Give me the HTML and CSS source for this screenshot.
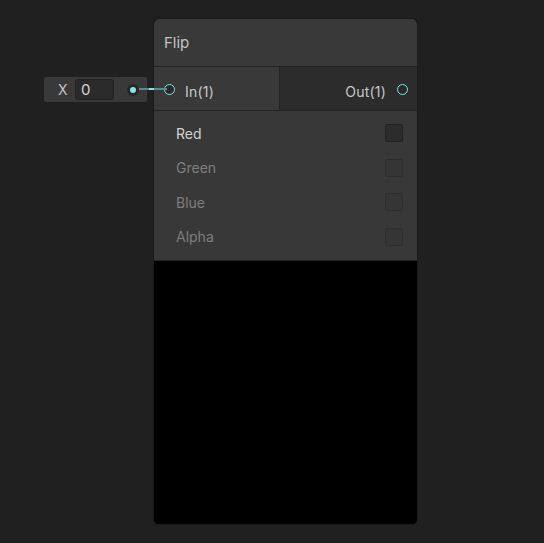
FILE: index.html
```html
<!DOCTYPE html>
<html>
<head>
<meta charset="utf-8">
<link rel="stylesheet" href="styles.css">
</head>
<body>
<div class="canvas">
  <div class="inline-field">
    <span class="field-label">X</span>
    <div class="field-box">0</div>
    <span class="field-port"><span class="field-port-dot"></span></span>
  </div>
  <div class="node">
    <div class="title">Flip</div>
    <div class="ports">
      <div class="inputs">
        <span class="port-ring"></span>
        <span class="port-label">In(1)</span>
      </div>
      <div class="outputs">
        <span class="port-label">Out(1)</span>
        <span class="port-ring"></span>
      </div>
    </div>
    <div class="settings">
      <div class="setting-row"><span class="setting-label">Red</span><span class="checkbox"></span></div>
      <div class="setting-row disabled"><span class="setting-label">Green</span><span class="checkbox"></span></div>
      <div class="setting-row disabled"><span class="setting-label">Blue</span><span class="checkbox"></span></div>
      <div class="setting-row disabled"><span class="setting-label">Alpha</span><span class="checkbox"></span></div>
    </div>
    <div class="preview"></div>
  </div>
  <svg class="edge" width="28" height="4" viewBox="0 0 28 4">
    <line x1="0" y1="2" x2="28" y2="2" stroke="#4f8f91" stroke-width="2"/>
    <line x1="10" y1="2" x2="15" y2="2" stroke="#84e4e7" stroke-width="2"/>
  </svg>
</div>
</body>
</html>
```

FILE: styles.css
```css
html, body {
  margin: 0;
  padding: 0;
  background: #202020;
  font-family: Inter, "Noto Sans", sans-serif;
}

.canvas {
  position: relative;
  display: flex;
  align-items: flex-start;
  padding: 18px 0 0 44px;
  width: 544px;
  height: 543px;
  box-sizing: border-box;
}

.inline-field {
  margin-top: 59px;
  width: 103px;
  height: 25px;
  box-sizing: border-box;
  background: #393939;
  border-radius: 2px;
  display: flex;
  align-items: center;
  padding-left: 14px;
}

.field-label {
  color: #c2c2c2;
  font-size: 14px;
  width: 9px;
  text-align: center;
}

.field-box {
  margin-left: 8px;
  width: 39px;
  height: 21px;
  box-sizing: border-box;
  background: #2a2a2a;
  border: 1px solid #212121;
  border-radius: 3px;
  color: #d4d4d4;
  font-size: 15px;
  line-height: 19px;
  padding-left: 5px;
}

.field-port {
  margin-left: 13px;
  width: 12px;
  height: 12px;
  border-radius: 50%;
  background: #262626;
  display: flex;
  align-items: center;
  justify-content: center;
  margin-top: 1px;
}

.field-port-dot {
  width: 6px;
  height: 6px;
  border-radius: 50%;
  background: #84e4e7;
}

.node {
  margin-left: 6px;
  width: 265px;
  height: 507px;
  box-sizing: border-box;
  border: 1px solid #1a1a1a;
  border-radius: 6px;
  overflow: hidden;
  display: flex;
  flex-direction: column;
  background: #000;
}

.title {
  height: 48px;
  box-sizing: border-box;
  background: #393939;
  border-bottom: 1px solid #232323;
  color: #c4c4c4;
  font-size: 15px;
  padding-left: 10px;
  display: flex;
  align-items: center;
  padding-bottom: 1px;
}

.ports {
  height: 44px;
  box-sizing: border-box;
  display: flex;
  border-bottom: 1px solid #232323;
}

.inputs {
  width: 126px;
  box-sizing: border-box;
  background: #393939;
  border-right: 1px solid #232323;
  display: flex;
  align-items: center;
  padding-left: 10px;
  gap: 10px;
}

.outputs {
  flex: 1;
  background: #2c2c2c;
  display: flex;
  align-items: center;
  justify-content: flex-end;
  padding-right: 9px;
  gap: 11px;
}

.port-ring {
  width: 11px;
  height: 11px;
  box-sizing: border-box;
  border: 1.5px solid #84e4e7;
  border-radius: 50%;
  background: #2a2a2a;
  margin-top: 1px;
}

.port-label {
  color: #c8c8c8;
  font-size: 14px;
  letter-spacing: 0.2px;
  margin-top: 5px;
}

.settings {
  height: 150px;
  box-sizing: border-box;
  background: #383838;
  border-bottom: 1px solid #232323;
  padding: 5px 14px 6px 22px;
  display: flex;
  flex-direction: column;
}

.setting-row {
  height: 34.5px;
  display: flex;
  align-items: center;
  justify-content: space-between;
}

.setting-label {
  color: #d2d2d2;
  font-size: 14px;
}

.checkbox {
  width: 18px;
  height: 18px;
  box-sizing: border-box;
  border: 1px solid #222;
  background: #2c2c2c;
  border-radius: 2px;
}

.disabled .setting-label {
  color: #7e7e7e;
}

.disabled .checkbox {
  border-color: #2e2e2e;
  background: #353535;
}

.preview {
  flex: 1;
  background: #000;
}

.edge {
  position: absolute;
  left: 139px;
  top: 87px;
}
```
